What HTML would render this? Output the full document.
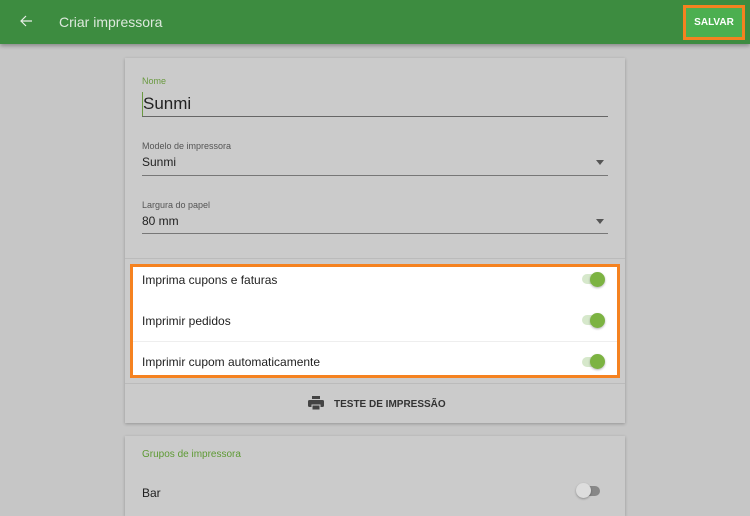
<!DOCTYPE html><html><head><style>
body{margin:0;width:750px;height:512px;overflow:hidden;background:#c6c6c6;font-family:"Liberation Sans",sans-serif;position:relative}
.a{position:absolute}
.hdr{left:0;top:0;width:750px;height:44px;background:#3d8c40;box-shadow:0 2px 4px rgba(0,0,0,.3)}
.card{background:#cbcbcb;box-shadow:0 1px 3px rgba(0,0,0,.25)}
.lbl{font-size:9px;color:#555}
.val{font-size:12px;color:#222}
.line{height:1px;background:#777}
.tog{width:20px;height:10px;border-radius:5px;background:#d6e8cb}
.knob{width:15px;height:15px;border-radius:50%;background:#7cb342;box-shadow:0 1px 2px rgba(0,0,0,.3)}
.row{font-size:12px;color:#222}
</style></head><body>
<div class="a hdr"></div>
<svg class="a" style="left:19px;top:14px" width="14" height="14" viewBox="0 0 14 14"><path d="M13 7H2M7 2L2 7l5 5" stroke="#e8f0e8" stroke-width="1.2" fill="none"/></svg>
<div class="a" style="left:59px;top:14px;font-size:14px;color:#dde9dd">Criar impressora</div>
<div class="a" style="left:683px;top:5px;width:56px;height:29px;background:#4caf50;border:3px solid #f58220;color:#fff;font-size:10px;font-weight:bold;text-align:center;line-height:29px">SALVAR</div>
<div class="a card" style="left:125px;top:58px;width:500px;height:365px"></div>
<div class="a lbl" style="left:142px;top:76px;color:#6a9a40">Nome</div>
<div class="a" style="left:142px;top:92px;width:1px;height:24px;background:#6a9a40"></div>
<div class="a" style="left:143px;top:94px;font-size:17px;color:#222">Sunmi</div>
<div class="a" style="left:142px;top:116px;width:466px;height:1px;background:#666"></div>
<div class="a lbl" style="left:142px;top:141px">Modelo de impressora</div>
<div class="a val" style="left:142px;top:155px">Sunmi</div>
<div class="a" style="left:596px;top:160px;border:4px solid transparent;border-top:5px solid #555;border-bottom:0"></div>
<div class="a line" style="left:142px;top:175px;width:466px"></div>
<div class="a lbl" style="left:142px;top:200px">Largura do papel</div>
<div class="a val" style="left:142px;top:214px">80 mm</div>
<div class="a" style="left:596px;top:219px;border:4px solid transparent;border-top:5px solid #555;border-bottom:0"></div>
<div class="a line" style="left:142px;top:233px;width:466px"></div>
<div class="a" style="left:125px;top:258px;width:500px;height:1px;background:#bbb"></div>
<div class="a" style="left:130px;top:264px;width:484px;height:108px;background:#fff;border:3px solid #f58220"></div>
<div class="a" style="left:133px;top:341px;width:484px;height:1px;background:#eee"></div>
<div class="a row" style="left:142px;top:273px">Imprima cupons e faturas</div>
<div class="a row" style="left:142px;top:314px">Imprimir pedidos</div>
<div class="a row" style="left:142px;top:355px">Imprimir cupom automaticamente</div>
<div class="a tog" style="left:582px;top:274px"></div><div class="a knob" style="left:590px;top:272px"></div>
<div class="a tog" style="left:582px;top:315px"></div><div class="a knob" style="left:590px;top:313px"></div>
<div class="a tog" style="left:582px;top:357px"></div><div class="a knob" style="left:590px;top:354px"></div>
<div class="a" style="left:125px;top:383px;width:500px;height:1px;background:#bbb"></div>
<svg class="a" style="left:308px;top:396px" width="16" height="15" viewBox="0 0 16 15"><rect x="4" y="0" width="8" height="3" fill="#444"/><rect x="0" y="4" width="16" height="7" rx="1.5" fill="#444"/><rect x="4" y="9" width="8" height="5" fill="#444" stroke="#cbcbcb" stroke-width="1"/></svg>
<div class="a" style="left:334px;top:399px;font-size:10px;font-weight:bold;color:#333">TESTE DE IMPRESSÃO</div>
<div class="a card" style="left:125px;top:436px;width:500px;height:80px"></div>
<div class="a" style="left:142px;top:449px;font-size:10px;color:#5e9a34">Grupos de impressora</div>
<div class="a row" style="left:142px;top:486px">Bar</div>
<div class="a" style="left:580px;top:486px;width:20px;height:10px;border-radius:5px;background:#888"></div>
<div class="a" style="left:576px;top:483px;width:15px;height:15px;border-radius:50%;background:#ddd;box-shadow:0 1px 2px rgba(0,0,0,.3)"></div>
</body></html>
